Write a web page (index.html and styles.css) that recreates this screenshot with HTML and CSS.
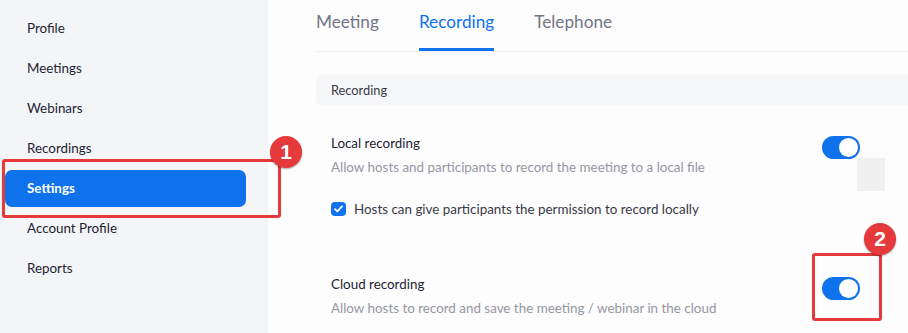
FILE: index.html
```html
<!DOCTYPE html>
<html lang="en">
<head>
  <meta charset="UTF-8">
  <title>Settings - Recording</title>
  <link rel="stylesheet" href="styles.css">
</head>
<body>
  <div class="page">
    <nav class="sidebar">
      <a class="nav-item">Profile</a>
      <a class="nav-item">Meetings</a>
      <a class="nav-item">Webinars</a>
      <a class="nav-item">Recordings</a>
      <a class="nav-item active">Settings</a>
      <a class="nav-item">Account Profile</a>
      <a class="nav-item">Reports</a>
    </nav>

    <main class="content">
      <div class="tabs">
        <span class="tab">Meeting</span>
        <span class="tab active">Recording</span>
        <span class="tab">Telephone</span>
      </div>

      <div class="section-head">Recording</div>

      <div class="setting">
        <div class="setting-text">
          <div class="setting-title">Local recording</div>
          <div class="setting-desc">Allow hosts and participants to record the meeting to a local file</div>
          <label class="check-row">
            <span class="checkbox">
              <svg width="9" height="8" viewBox="0 0 9 8"><path d="M1 4.2 L3.4 6.4 L8 1.4" fill="none" stroke="#fff" stroke-width="1.8" stroke-linecap="round" stroke-linejoin="round"/></svg>
            </span>
            Hosts can give participants the permission to record locally
          </label>
        </div>
        <span class="toggle"><span class="knob"></span></span>
        <span class="smudge"></span>
      </div>

      <div class="setting cloud">
        <div class="setting-text">
          <div class="setting-title">Cloud recording</div>
          <div class="setting-desc">Allow hosts to record and save the meeting / webinar in the cloud</div>
        </div>
        <span class="toggle"><span class="knob"></span></span>
      </div>
    </main>

    <!-- annotations -->
    <div class="mark mark-settings"></div>
    <div class="badge badge-one">1</div>
    <div class="mark mark-cloud"></div>
    <div class="badge badge-two">2</div>
  </div>
</body>
</html>
```

FILE: styles.css
```css
body {
  margin: 0;
  font-family: Lato, 'Open Sans', sans-serif;
  background: #fdfdfd;
  color: #232333;
}

.page {
  position: relative;
  display: flex;
  width: 908px;
  height: 333px;
  overflow: hidden;
}

.sidebar {
  width: 268px;
  flex-shrink: 0;
  background: #f4f5f7;
  padding-top: 10px;
  display: flex;
  flex-direction: column;
  gap: 3px;
}

.nav-item {
  display: block;
  margin-left: 5px;
  width: 219px;
  height: 37px;
  line-height: 37px;
  padding-left: 22px;
  font-size: 13.4px;
  color: #232333;
  border-radius: 7px;
}

.nav-item.active {
  background: #0e72ed;
  color: #fff;
  font-weight: 700;
}

.content {
  flex: 1;
  padding-left: 48px;
}

.tabs {
  display: flex;
  gap: 40px;
  border-bottom: 1px solid #efeff2;
  height: 51px;
}

.tab {
  padding-top: 11px;
  height: 37px;
  font-size: 17.2px;
  line-height: 22px;
  color: #747487;
}

.tab.active {
  color: #0e72ed;
  border-bottom: 3px solid #0e72ed;
}

.section-head {
  margin-top: 23px;
  height: 30px;
  line-height: 31px;
  padding-left: 15px;
  font-size: 12.8px;
  color: #393946;
  background: #f6f7f9;
  border-radius: 6px 0 0 6px;
}

.setting {
  position: relative;
  display: flex;
  justify-content: space-between;
  align-items: flex-start;
  padding: 0 48px 0 15px;
  margin-top: 29px;
}

.setting.cloud {
  margin-top: 57px;
}

.setting-title {
  font-size: 13.4px;
  line-height: 18px;
  color: #232333;
}

.setting-desc {
  margin-top: 6px;
  font-size: 13.4px;
  line-height: 18px;
  color: #9696a3;
}

.check-row {
  display: flex;
  align-items: center;
  gap: 8px;
  margin-top: 24px;
  font-size: 13.4px;
  line-height: 18px;
  color: #393946;
}

.checkbox {
  width: 15px;
  height: 14px;
  border-radius: 4px;
  background: #0e72ed;
  display: flex;
  align-items: center;
  justify-content: center;
}

.toggle {
  position: relative;
  margin-top: 2px;
  width: 38px;
  height: 23px;
  border-radius: 12px;
  background: #0e72ed;
}

.knob {
  position: absolute;
  top: 2px;
  right: 2px;
  width: 19px;
  height: 19px;
  border-radius: 50%;
  background: #fff;
}

.smudge {
  position: absolute;
  left: 541px;
  top: 24px;
  width: 28px;
  height: 33px;
  background: #f0f0f0;
}

.mark {
  position: absolute;
  border: 3px solid #e5393c;
  border-radius: 3px;
}

.mark-settings {
  left: 2px;
  top: 159px;
  width: 273px;
  height: 53px;
}

.mark-cloud {
  left: 812px;
  top: 253px;
  width: 64px;
  height: 62px;
}

.badge {
  position: absolute;
  width: 32px;
  height: 32px;
  border-radius: 50%;
  background: #e5393c;
  color: #fff;
  font-family: 'Liberation Sans', Arial, sans-serif;
  font-weight: 700;
  font-size: 21px;
  line-height: 32px;
  text-align: center;
  box-shadow: 0 1px 2px rgba(0, 0, 0, 0.35);
}

.badge-one {
  left: 270px;
  top: 136px;
}

.badge-two {
  left: 864px;
  top: 223px;
}
```
